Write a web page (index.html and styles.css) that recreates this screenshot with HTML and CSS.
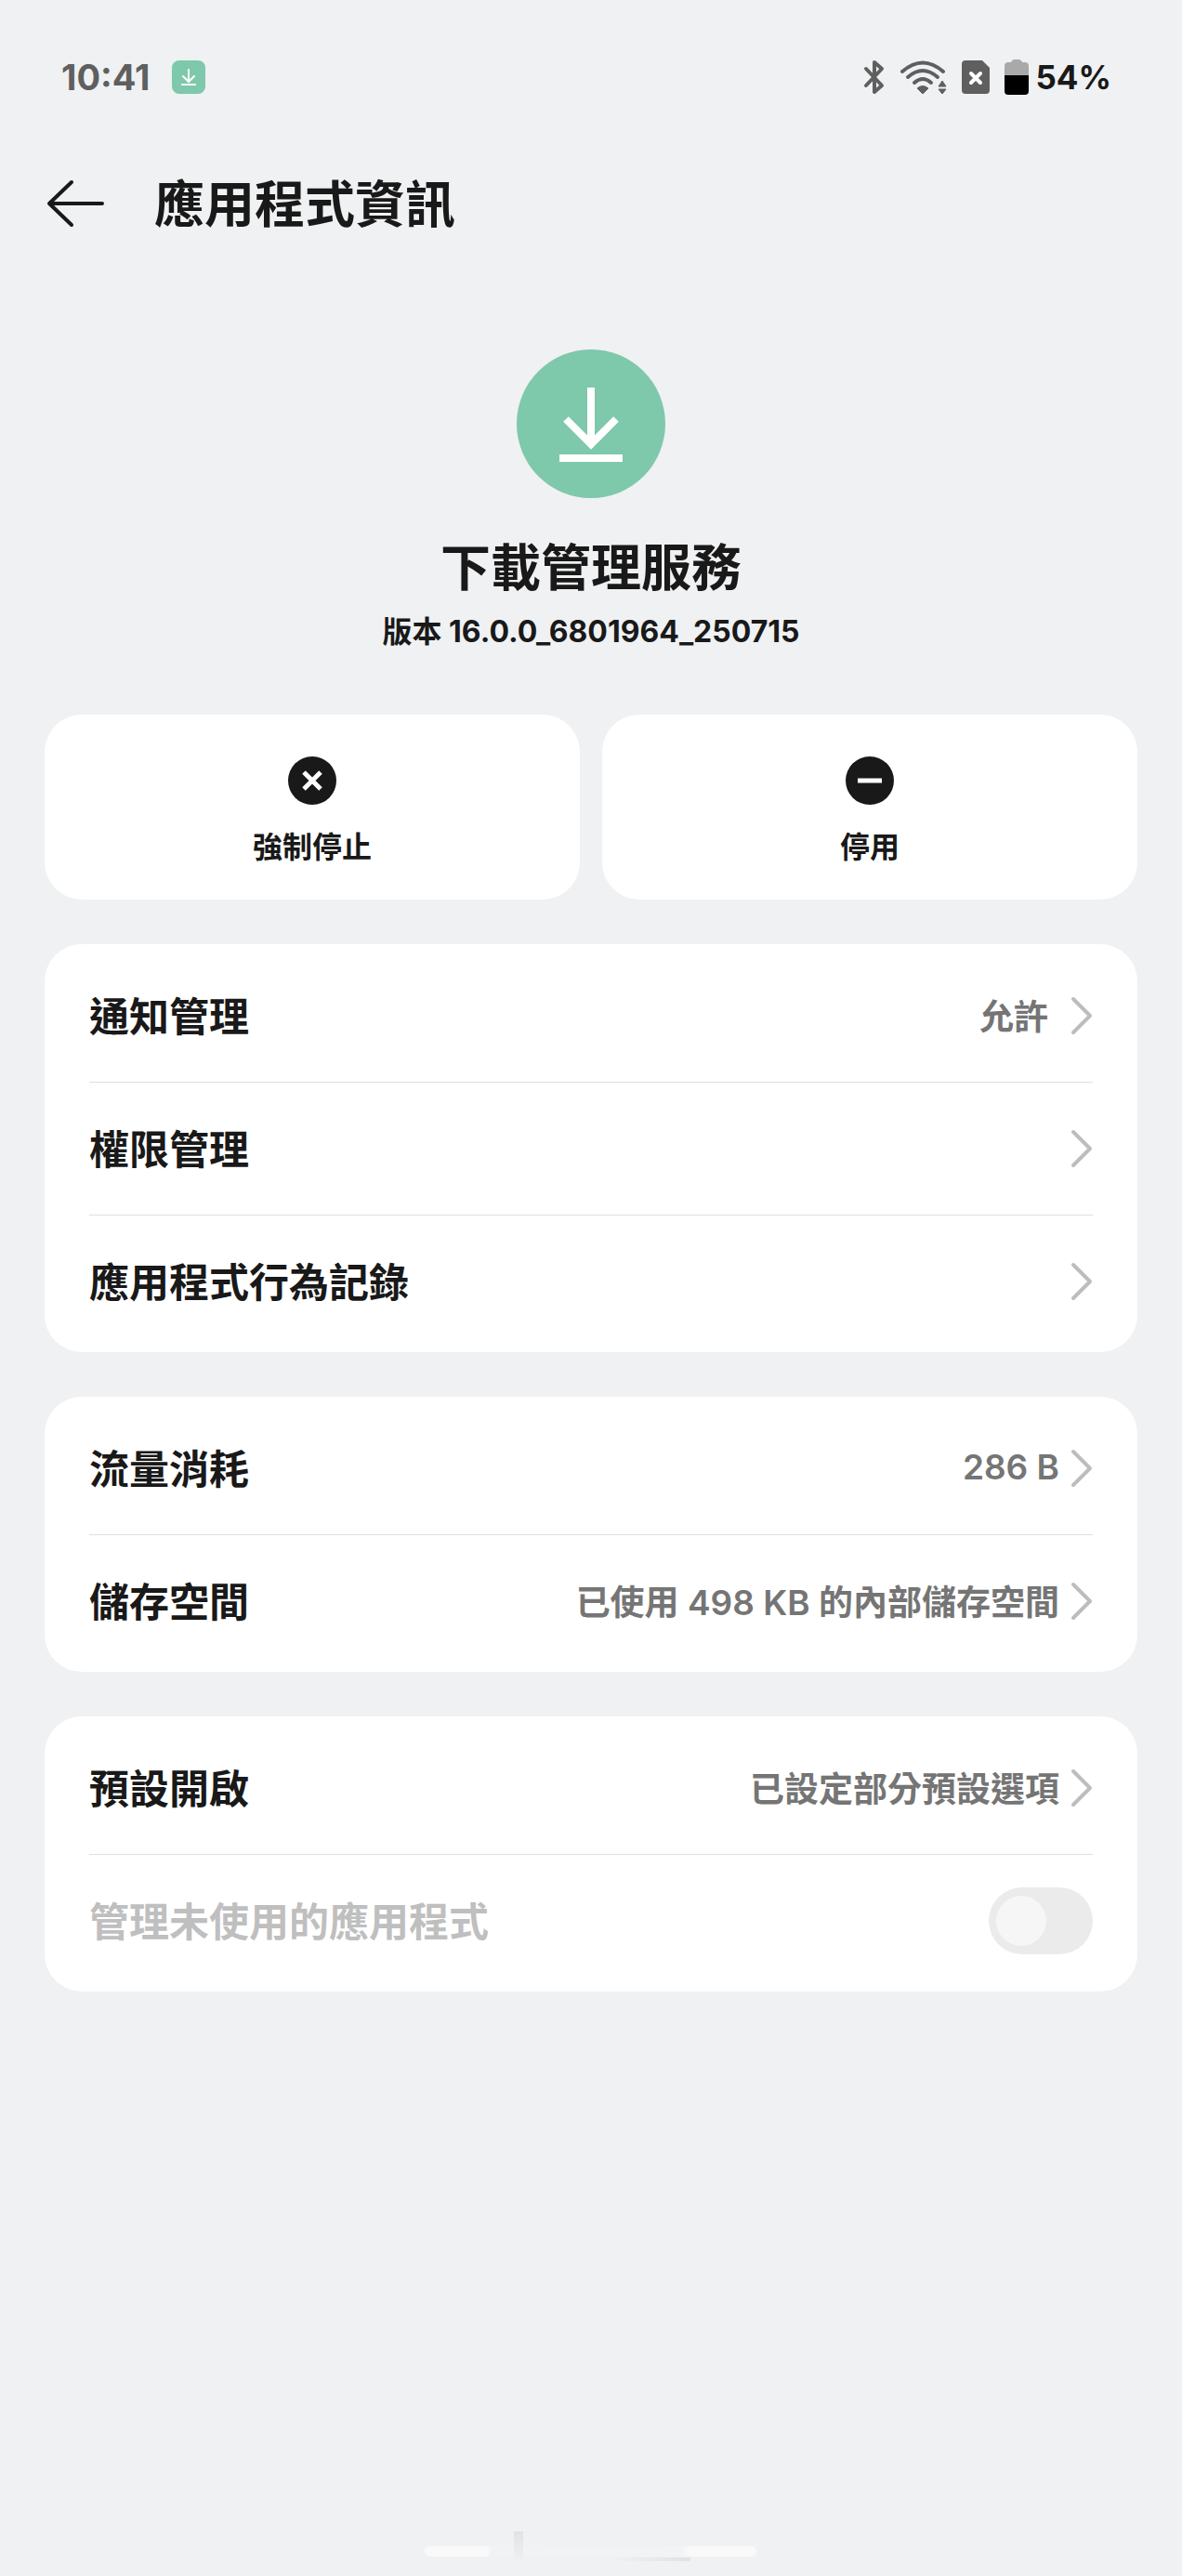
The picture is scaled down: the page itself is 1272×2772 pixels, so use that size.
FILE: index.html
```html
<!DOCTYPE html>
<html lang="zh-Hant">
<head>
    <meta charset="UTF-8">
    <meta name="viewport" content="width=device-width, initial-scale=1.0">
    <title>應用程式資訊</title>
    <link rel="stylesheet" href="styles.css">
</head>
<body>
    <div class="status-bar">
        <div class="status-left">
            <span class="time">10:41</span>
            <svg class="badge" viewBox="0 0 36 36" width="36" height="36">
                <rect width="36" height="36" rx="8" fill="#7ec8ab"/>
                <path d="M18 10v13M12 17l6 6 6-6M11 26h14" fill="none" stroke="#fff" stroke-width="2" stroke-linecap="round"/>
            </svg>
        </div>
        <div class="status-right">
            <svg viewBox="0 0 24 38" width="24" height="38">
                <path d="M3 10l17 18-8 7V3l8 7L3 28" fill="none" stroke="#5f5f5f" stroke-width="4" stroke-linecap="round" stroke-linejoin="round"/>
            </svg>
            <svg viewBox="0 0 50 38" width="50" height="38">
                <g fill="none" stroke="#5f5f5f" stroke-width="4" stroke-linecap="round">
                    <path d="M2 13Q24 -6 46 13"/>
                    <path d="M8 19Q24 5 40 19"/>
                    <path d="M15 25Q24 17 33 25"/>
                </g>
                <path d="M18 31q6-5 12 0l-6 6z" fill="#5f5f5f" stroke="#5f5f5f" stroke-linejoin="round"/>
                <path d="M45 23l4 6h-8zM45 37l4-5h-8z" fill="#5f5f5f" stroke="#5f5f5f" stroke-linejoin="round"/>
            </svg>
            <svg viewBox="0 0 30 38" width="30" height="38">
                <path d="M4 1h18l8 8v24q0 4-4 4H4q-4 0-4-4V5q0-4 4-4z" fill="#5f5f5f"/>
                <path d="M10 15l10 10M20 15L10 25" stroke="#fff" stroke-width="4" stroke-linecap="round"/>
            </svg>
            <div class="battery">
                <svg viewBox="0 0 26 38" width="26" height="38">
                    <path d="M0 17V7q0-4 4-4h3q1-3 4-3h4q3 0 4 3h3q4 0 4 4v10z" fill="#a9a9a9"/>
                    <path d="M0 17h26v17q0 4-4 4H4q-4 0-4-4z" fill="#000"/>
                </svg>
                <span class="percent">54%</span>
            </div>
        </div>
    </div>

    <header class="title-bar">
        <button type="button" class="back" aria-label="返回">
            <svg viewBox="0 0 64 52" width="64" height="52">
                <path d="M60 26H3M27 3L3 26l24 23" fill="none" stroke="#191919" stroke-width="4" stroke-linecap="round" stroke-linejoin="round"/>
            </svg>
        </button>
        <h1>應用程式資訊</h1>
    </header>

    <main>
        <section class="app">
            <svg viewBox="0 0 160 160" width="160" height="160">
                <circle cx="80" cy="80" r="80" fill="#7ec8ab"/>
                <path d="M80 41v60M53 75l27 27 27-27M46 117h68" fill="none" stroke="#fff" stroke-width="8"/>
            </svg>
            <h2>下載管理服務</h2>
            <p>版本 16.0.0_6801964_250715</p>
        </section>

        <div class="actions">
            <button type="button" class="action">
                <svg viewBox="0 0 52 52" width="52" height="52">
                    <circle cx="26" cy="26" r="26" fill="#191919"/>
                    <path d="M17 17l18 18M35 17L17 35" stroke="#fff" stroke-width="5"/>
                </svg>
                強制停止
            </button>
            <button type="button" class="action">
                <svg viewBox="0 0 52 52" width="52" height="52">
                    <circle cx="26" cy="26" r="26" fill="#191919"/>
                    <path d="M13 26h26" stroke="#fff" stroke-width="5"/>
                </svg>
                停用
            </button>
        </div>

        <nav class="card">
            <a href="#notifications" class="row">
                <span class="label">通知管理</span>
                <span class="value spaced">允許</span>
                <svg class="chevron" viewBox="0 0 24 42" width="24" height="42"><path d="M3 3l18 18L3 39"/></svg>
            </a>
            <a href="#permissions" class="row">
                <span class="label">權限管理</span>
                <svg class="chevron" viewBox="0 0 24 42" width="24" height="42"><path d="M3 3l18 18L3 39"/></svg>
            </a>
            <a href="#records" class="row">
                <span class="label">應用程式行為記錄</span>
                <svg class="chevron" viewBox="0 0 24 42" width="24" height="42"><path d="M3 3l18 18L3 39"/></svg>
            </a>
        </nav>

        <nav class="card">
            <a href="#data" class="row">
                <span class="label">流量消耗</span>
                <span class="value">286 B</span>
                <svg class="chevron" viewBox="0 0 24 42" width="24" height="42"><path d="M3 3l18 18L3 39"/></svg>
            </a>
            <a href="#storage" class="row">
                <span class="label">儲存空間</span>
                <span class="value">已使用 498 KB 的內部儲存空間</span>
                <svg class="chevron" viewBox="0 0 24 42" width="24" height="42"><path d="M3 3l18 18L3 39"/></svg>
            </a>
        </nav>

        <div class="card">
            <a href="#defaults" class="row">
                <span class="label">預設開啟</span>
                <span class="value">已設定部分預設選項</span>
                <svg class="chevron" viewBox="0 0 24 42" width="24" height="42"><path d="M3 3l18 18L3 39"/></svg>
            </a>
            <div class="row disabled">
                <label class="label" for="unused">管理未使用的應用程式</label>
                <input type="checkbox" id="unused" class="switch" disabled>
            </div>
        </div>
    </main>

    <footer>
        <svg viewBox="0 0 360 40" width="360" height="40">
            <defs>
                <linearGradient id="fade">
                    <stop offset="0" stop-color="#f9f9f9"/>
                    <stop offset="19%" stop-color="#f9f9f9"/>
                    <stop offset="20%" stop-color="#f1f2f4"/>
                    <stop offset="77%" stop-color="#f2f3f5"/>
                    <stop offset="80%" stop-color="#f9f9f9"/>
                    <stop offset="1" stop-color="#f9f9f9"/>
                </linearGradient>
                <linearGradient id="mark" x2="0" y2="1">
                    <stop offset="0" stop-color="#e1e2e4"/>
                    <stop offset="1" stop-color="#eff1f3"/>
                </linearGradient>
                <linearGradient id="shade">
                    <stop offset="0" stop-color="#eff1f3"/>
                    <stop offset="1" stop-color="#e1e2e4"/>
                </linearGradient>
            </defs>
            <rect x="1" y="20" width="357" height="11" rx="5" fill="url(#fade)"/>
            <rect x="97" y="4" width="10" height="34" fill="url(#mark)"/>
            <rect x="200" y="32" width="87" height="4" fill="url(#shade)"/>
        </svg>
    </footer>
</body>
</html>
```

FILE: styles.css
```css
* {
    box-sizing: border-box;
}
body {
    display: flex;
    flex-direction: column;
    min-height: 100vh;
    margin: 0;
    background-color: #eff1f3;
    color: #191919;
    font-family: Inter, "Noto Sans CJK TC", sans-serif;
    font-weight: 700;
}
svg {
    display: block;
    flex: none;
}
h1, h2, p {
    margin: 0;
}
h1, h2 {
    padding-top: 4px;
    font-size: 54px;
    line-height: 72px;
}
button {
    border: none;
    color: inherit;
    font: inherit;
    cursor: pointer;
}

/* status bar */
.status-bar {
    display: flex;
    align-items: center;
    justify-content: space-between;
    height: 166px;
    padding: 0 76px 0 66px;
}
.status-left {
    display: flex;
    align-items: center;
    gap: 24px;
}
.time {
    color: #5f5f5f;
    font-size: 38px;
}
.status-right {
    display: flex;
    align-items: center;
    gap: 16px;
}
.battery {
    display: flex;
    align-items: center;
    gap: 7px;
}
.percent {
    font-size: 35px;
}

/* title */
.title-bar {
    display: flex;
    align-items: center;
    gap: 52px;
    height: 106px;
    padding: 0 50px;
}
.back {
    padding: 0;
    background: none;
}

main {
    display: flex;
    flex-direction: column;
    gap: 48px;
    padding: 104px 48px 48px;
}
.app {
    display: flex;
    flex-direction: column;
    align-items: center;
    padding-bottom: 17px;
}
.app h2 {
    margin-top: 36px;
}
.app p {
    margin-top: 8px;
    font-size: 32px;
    line-height: 48px;
}

.actions {
    display: flex;
    gap: 24px;
}
.action {
    display: flex;
    flex: 1;
    flex-direction: column;
    align-items: center;
    gap: 22px;
    padding: 45px 0 32px;
    border-radius: 40px;
    background-color: #fff;
    font-size: 32px;
    line-height: 48px;
}

/* settings cards */
.card {
    padding: 5px 48px;
    border-radius: 40px;
    background-color: #fff;
}
.row {
    display: flex;
    align-items: center;
    height: 143px;
    color: inherit;
    text-decoration: none;
}
.row + .row {
    border-top: 1px solid #dfdfdf;
}
.label {
    flex: 1;
    padding-bottom: 4px;
    font-size: 43px;
}
.value {
    margin-right: 12px;
    padding-bottom: 2px;
    color: #757575;
    font-size: 37px;
    font-weight: 600;
}
.value.spaced {
    margin-right: 24px;
}
.chevron {
    fill: none;
    stroke: #bdbdbd;
    stroke-width: 4;
    stroke-linecap: round;
    stroke-linejoin: round;
}
.disabled {
    color: #bfbfbf;
}
.switch {
    appearance: none;
    width: 112px;
    height: 72px;
    margin: 0;
    padding: 9px 8px;
    border-radius: 36px;
    background-color: #ebebeb;
}
.switch::before {
    content: "";
    display: block;
    width: 54px;
    height: 54px;
    border-radius: 50%;
    background-color: #f6f6f6;
}

footer {
    display: flex;
    justify-content: center;
    margin-top: auto;
    padding-bottom: 12px;
}
```
